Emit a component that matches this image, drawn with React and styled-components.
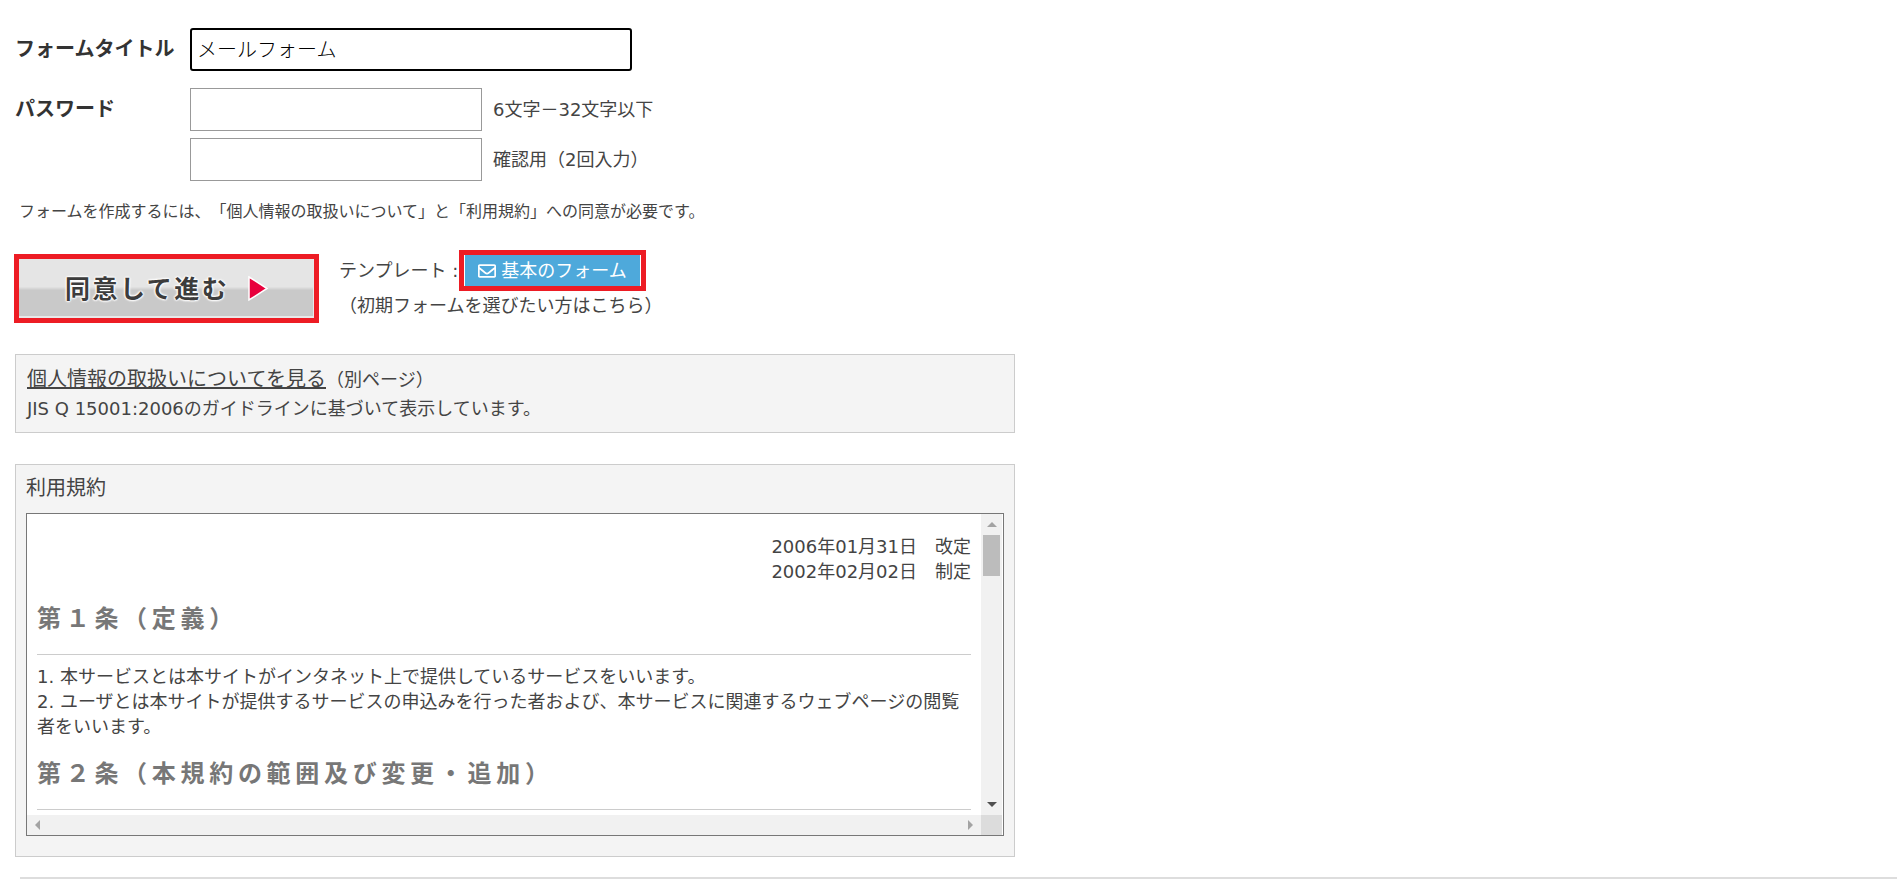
import styled, { createGlobalStyle, css } from 'styled-components';
import { FaRegEnvelope } from 'react-icons/fa';

const GlobalStyle = createGlobalStyle`
  html, body {
    margin: 0;
    padding: 0;
    background: #fff;
  }
  body {
    font-family: 'DejaVu Sans', 'Noto Sans CJK JP', sans-serif;
    font-size: 18px;
    line-height: 25px;
    color: #444;
    font-weight: 400;
    text-spacing-trim: space-all;
  }
  * {
    box-sizing: border-box;
  }
`;

const Page = styled.div`
  padding: 28px 0 0 15px;
  height: 879px;
  overflow: hidden;
`;

const FieldRow = styled.div`
  display: flex;
  margin-bottom: ${(props) => props.$gap || 0}px;
`;

const Label = styled.div`
  width: 175px;
  font-size: 20px;
  font-weight: 700;
  line-height: 25px;
  color: #333;
  padding-top: ${(props) => props.$top || 0}px;
`;

const TitleInput = styled.input`
  width: 442px;
  height: 43px;
  border: 2px solid #000;
  border-radius: 3px;
  padding: 0 5px 2px;
  font-family: inherit;
  font-size: 20px;
  font-weight: 300;
  color: #000;
  outline: none;
`;

const PasswordList = styled.div`
  display: flex;
  flex-direction: column;
  gap: 7px;
`;

const PasswordLine = styled.div`
  display: flex;
  align-items: center;
`;

const PasswordInput = styled.input`
  width: 292px;
  height: 43px;
  border: 1px solid #999;
  background: #fff;
  outline: none;
`;

const Hint = styled.span`
  margin-left: 11px;
`;

const Note = styled.p`
  margin: 18px 0 0 4px;
  font-size: 16px;
`;

const ActionRow = styled.div`
  display: flex;
  align-items: flex-start;
  margin-top: 26px;
`;

const AgreeButton = styled.button`
  display: flex;
  align-items: center;
  gap: 18px;
  width: 305px;
  height: 69px;
  margin: 4px 20px 0 -1px;
  padding: 0 0 0 46px;
  border: 5px solid #ed1c24;
  background: linear-gradient(#e5e5e5 0, #e5e5e5 47%, #c9c9c9 53%, #c9c9c9 100%);
  box-shadow: inset -1px -2px 0 #e8e8e8;
  cursor: pointer;
`;

const AgreeText = styled.span`
  padding-bottom: 3px;
  font-family: 'Noto Sans CJK JP', sans-serif;
  font-size: 25px;
  font-weight: 700;
  letter-spacing: 2.5px;
  line-height: 30px;
  color: #3c3c3c;
  text-shadow: 0 0 2px #fff, 0 0 2px #fff, 0 0 2px #fff, 0 0 3px #fff, 0 0 3px #fff;
`;

const TemplateColumn = styled.div`
  display: flex;
  flex-direction: column;
`;

const TemplateLine = styled.div`
  display: flex;
  align-items: center;
`;

const TemplateLabel = styled.span`
  width: 120px;
  white-space: nowrap;
`;

const TemplateButton = styled.button`
  display: flex;
  align-items: center;
  justify-content: center;
  gap: 5px;
  width: 187px;
  height: 41px;
  padding: 0;
  border: 5px solid #ed1c24;
  background: #4ea9db;
  box-shadow: inset 1px 0 0 #fff, inset -1px 0 0 #fff;
  color: #fff;
  font-family: inherit;
  font-size: 18px;
  font-weight: 400;
  line-height: 25px;
  cursor: pointer;
`;

const TemplateNote = styled.div`
  margin-top: 2px;
`;

const InfoBox = styled.div`
  width: 1000px;
  height: 79px;
  margin-top: 31px;
  padding: 12px 11px 0;
  border: 1px solid #ccc;
  background: #f4f4f4;
`;

const InfoLink = styled.a`
  font-size: 20px;
  color: #444;
  text-decoration: underline;
`;

const InfoText = styled.div`
  margin-top: 4px;
`;

const TermsPanel = styled.div`
  width: 1000px;
  height: 393px;
  margin-top: 31px;
  padding: 9px 10px 0;
  border: 1px solid #ccc;
  background: #f4f4f4;
`;

const TermsTitle = styled.div`
  font-size: 20px;
  line-height: 28px;
  margin-bottom: 11px;
`;

const ScrollFrame = styled.div`
  display: grid;
  grid-template-columns: 1fr 21px;
  grid-template-rows: 1fr 20px;
  height: 323px;
  padding-right: 1px;
  border: 1px solid #777;
  background: #fff;
`;

const ScrollContent = styled.div`
  overflow: hidden;
  padding: 20px 10px 0;
  background: #fff;
`;

const DateBlock = styled.div`
  margin-bottom: 1px;
  text-align: right;
`;

const ArticleHeading = styled.h2`
  margin: 18px 0 9px;
  padding-bottom: 22px;
  border-bottom: 1px solid #ccc;
  font-family: 'Noto Sans CJK JP', sans-serif;
  font-size: 24px;
  font-weight: 700;
  letter-spacing: 4.7px;
  line-height: 30px;
  color: #777;
`;

const VerticalBar = styled.div`
  display: flex;
  flex-direction: column;
  justify-content: space-between;
  background: #f1f1f1;
`;

const ArrowCell = styled.div`
  display: flex;
  align-items: center;
  justify-content: center;
  height: 21px;
`;

const VerticalThumb = styled.div`
  width: 17px;
  height: 41px;
  margin-left: 2px;
  background: #bcbcbc;
`;

const Spacer = styled.div`
  flex: 1;
`;

const HorizontalBar = styled.div`
  display: flex;
  align-items: center;
  justify-content: space-between;
  padding: 0 8px;
  background: #f1f1f1;
`;

const Corner = styled.div`
  background: #dcdcdc;
`;

const arrows = {
  up: css`
    border-width: 0 5px 5px;
    border-bottom-color: #a3a3a3;
  `,
  down: css`
    border-width: 5px 5px 0;
    border-top-color: #505050;
  `,
  left: css`
    border-width: 5px 5px 5px 0;
    border-right-color: #a3a3a3;
  `,
  right: css`
    border-width: 5px 0 5px 5px;
    border-left-color: #a3a3a3;
  `,
};

const Arrow = styled.span`
  width: 0;
  height: 0;
  border-style: solid;
  border-color: transparent;
  ${(props) => arrows[props.$dir]}
`;

const Rule = styled.hr`
  margin: 20px 0 0 5px;
  border: 0;
  border-top: 2px solid #ddd;
`;

const App = () => {
  return (
    <>
      <GlobalStyle />
      <Page>
        <FieldRow $gap={17}>
          <Label $top={9}>フォームタイトル</Label>
          <TitleInput type="text" defaultValue="メールフォーム" />
        </FieldRow>
        <FieldRow>
          <Label $top={9}>パスワード</Label>
          <PasswordList>
            <PasswordLine>
              <PasswordInput type="password" />
              <Hint>6文字－32文字以下</Hint>
            </PasswordLine>
            <PasswordLine>
              <PasswordInput type="password" />
              <Hint>確認用（2回入力）</Hint>
            </PasswordLine>
          </PasswordList>
        </FieldRow>
        <Note>フォームを作成するには、「個人情報の取扱いについて」と「利用規約」への同意が必要です。</Note>
        <ActionRow>
          <AgreeButton type="button">
            <AgreeText>同意して進む</AgreeText>
            <svg width="22" height="27" viewBox="0 0 22 27">
              <path d="M2 2 L20 13.5 L2 25 Z" fill="#e8003c" stroke="#fff" strokeWidth="1.5" />
            </svg>
          </AgreeButton>
          <TemplateColumn>
            <TemplateLine>
              <TemplateLabel>テンプレート :</TemplateLabel>
              <TemplateButton type="button">
                <FaRegEnvelope size={18} />
                基本のフォーム
              </TemplateButton>
            </TemplateLine>
            <TemplateNote>（初期フォームを選びたい方はこちら）</TemplateNote>
          </TemplateColumn>
        </ActionRow>
        <InfoBox>
          <div>
            <InfoLink href="#privacy">個人情報の取扱いについてを見る</InfoLink>（別ページ）
          </div>
          <InfoText>JIS Q 15001:2006のガイドラインに基づいて表示しています。</InfoText>
        </InfoBox>
        <TermsPanel>
          <TermsTitle>利用規約</TermsTitle>
          <ScrollFrame>
            <ScrollContent>
              <DateBlock>
                2006年01月31日　改定
                <br />
                2002年02月02日　制定
              </DateBlock>
              <ArticleHeading>第１条（定義）</ArticleHeading>
              <div>1. 本サービスとは本サイトがインタネット上で提供しているサービスをいいます。</div>
              <div>2. ユーザとは本サイトが提供するサービスの申込みを行った者および、本サービスに関連するウェブページの閲覧者をいいます。</div>
              <ArticleHeading>第２条（本規約の範囲及び変更・追加）</ArticleHeading>
            </ScrollContent>
            <VerticalBar>
              <ArrowCell>
                <Arrow $dir="up" />
              </ArrowCell>
              <VerticalThumb />
              <Spacer />
              <ArrowCell>
                <Arrow $dir="down" />
              </ArrowCell>
            </VerticalBar>
            <HorizontalBar>
              <Arrow $dir="left" />
              <Arrow $dir="right" />
            </HorizontalBar>
            <Corner />
          </ScrollFrame>
        </TermsPanel>
        <Rule />
      </Page>
    </>
  );
};

export default App;
